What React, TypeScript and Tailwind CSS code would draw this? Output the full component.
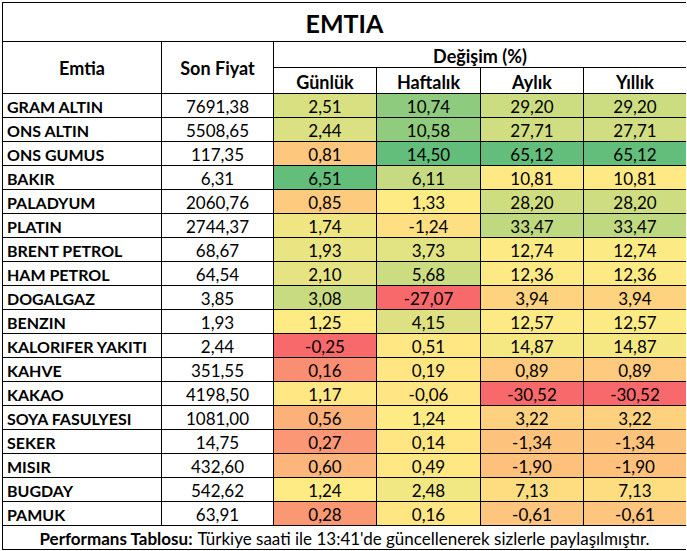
import React from "react";

type Row = { name: string; price: string; d: string; w: string; m: string; y: string };

const rows: Row[] = [
  { name: "GRAM ALTIN", price: "7691,38", d: "2,51", w: "10,74", m: "29,20", y: "29,20" },
  { name: "ONS ALTIN", price: "5508,65", d: "2,44", w: "10,58", m: "27,71", y: "27,71" },
  { name: "ONS GUMUS", price: "117,35", d: "0,81", w: "14,50", m: "65,12", y: "65,12" },
  { name: "BAKIR", price: "6,31", d: "6,51", w: "6,11", m: "10,81", y: "10,81" },
  { name: "PALADYUM", price: "2060,76", d: "0,85", w: "1,33", m: "28,20", y: "28,20" },
  { name: "PLATIN", price: "2744,37", d: "1,74", w: "-1,24", m: "33,47", y: "33,47" },
  { name: "BRENT PETROL", price: "68,67", d: "1,93", w: "3,73", m: "12,74", y: "12,74" },
  { name: "HAM PETROL", price: "64,54", d: "2,10", w: "5,68", m: "12,36", y: "12,36" },
  { name: "DOGALGAZ", price: "3,85", d: "3,08", w: "-27,07", m: "3,94", y: "3,94" },
  { name: "BENZIN", price: "1,93", d: "1,25", w: "4,15", m: "12,57", y: "12,57" },
  { name: "KALORIFER YAKITI", price: "2,44", d: "-0,25", w: "0,51", m: "14,87", y: "14,87" },
  { name: "KAHVE", price: "351,55", d: "0,16", w: "0,19", m: "0,89", y: "0,89" },
  { name: "KAKAO", price: "4198,50", d: "1,17", w: "-0,06", m: "-30,52", y: "-30,52" },
  { name: "SOYA FASULYESI", price: "1081,00", d: "0,56", w: "1,24", m: "3,22", y: "3,22" },
  { name: "SEKER", price: "14,75", d: "0,27", w: "0,14", m: "-1,34", y: "-1,34" },
  { name: "MISIR", price: "432,60", d: "0,60", w: "0,49", m: "-1,90", y: "-1,90" },
  { name: "BUGDAY", price: "542,62", d: "1,24", w: "2,48", m: "7,13", y: "7,13" },
  { name: "PAMUK", price: "63,91", d: "0,28", w: "0,16", m: "-0,61", y: "-0,61" },
];

const num = (s: string) => parseFloat(s.replace(",", "."));

// Excel style 3-color scale: min red, median yellow, max green
const RED = [248, 105, 107];
const YELLOW = [255, 235, 132];
const GREEN = [99, 190, 123];

const lerp = (a: number[], b: number[], t: number) =>
  `rgb(${a.map((v, i) => Math.round(v + (b[i] - v) * t)).join(",")})`;

function makeScale(values: number[]) {
  const s = [...values].sort((a, b) => a - b);
  const pos = (s.length - 1) / 2;
  const lo = Math.floor(pos);
  const mid = s[lo] + (s[Math.ceil(pos)] - s[lo]) * (pos - lo);
  const min = s[0];
  const max = s[s.length - 1];
  return (v: number) => {
    if (v <= mid) return lerp(RED, YELLOW, mid === min ? 1 : (v - min) / (mid - min));
    return lerp(YELLOW, GREEN, (v - mid) / (max - mid));
  };
}

const keys = ["d", "w", "m", "y"] as const;
const scales = Object.fromEntries(
  keys.map((k) => [k, makeScale(rows.map((r) => num(r[k])))])
) as Record<(typeof keys)[number], (v: number) => string>;

export default function App() {
  return (
    <div className="min-h-screen bg-white font-['Lato',sans-serif] text-black">
      <div className="ml-[2px] mt-[2px] w-[684px]">
        <div className="grid grid-cols-[158px_111px_102px_103px_102px_102px] grid-rows-[38px_25px_25px_repeat(18,23px)_23px] gap-px bg-black pt-px pl-px pb-px">
          {/* Title */}
          <div className="col-span-6 flex items-center justify-center bg-white pt-[3px] text-[25px] font-bold">
            EMTIA
          </div>

          {/* Header */}
          <div className="row-span-2 flex items-center justify-center bg-white pt-[2px] text-[18px] font-bold">
            Emtia
          </div>
          <div className="row-span-2 flex items-center justify-center bg-white pt-[2px] text-[18px] font-bold">
            Son Fiyat
          </div>
          <div className="col-span-4 flex items-center justify-center bg-white pt-[3px] text-[18px] font-bold">
            Değişim (%)
          </div>
          {["Günlük", "Haftalık", "Aylık", "Yıllık"].map((h) => (
            <div key={h} className="flex items-center justify-center bg-white pt-[3px] text-[18px] font-bold">
              {h}
            </div>
          ))}

          {/* Rows */}
          {rows.map((r) => (
            <React.Fragment key={r.name}>
              <div className="flex items-center bg-white pl-[4px] pt-[2px] text-[16px] font-bold">{r.name}</div>
              <div className="flex items-center justify-center bg-white pt-[2px] text-[17px]">{r.price}</div>
              {keys.map((k) => (
                <div
                  key={k}
                  className="flex items-center justify-center pt-[2px] text-[17px]"
                  style={{ backgroundColor: scales[k](num(r[k])) }}
                >
                  {r[k]}
                </div>
              ))}
            </React.Fragment>
          ))}

          {/* Footer */}
          <div className="col-span-6 flex items-center justify-center bg-white pt-[2px] text-[17px]">
            <span className="font-bold">Performans Tablosu:</span>
            <span className="ml-[5px]">Türkiye saati ile 13:41'de güncellenerek sizlerle paylaşılmıştır.</span>
          </div>
        </div>
      </div>
    </div>
  );
}
